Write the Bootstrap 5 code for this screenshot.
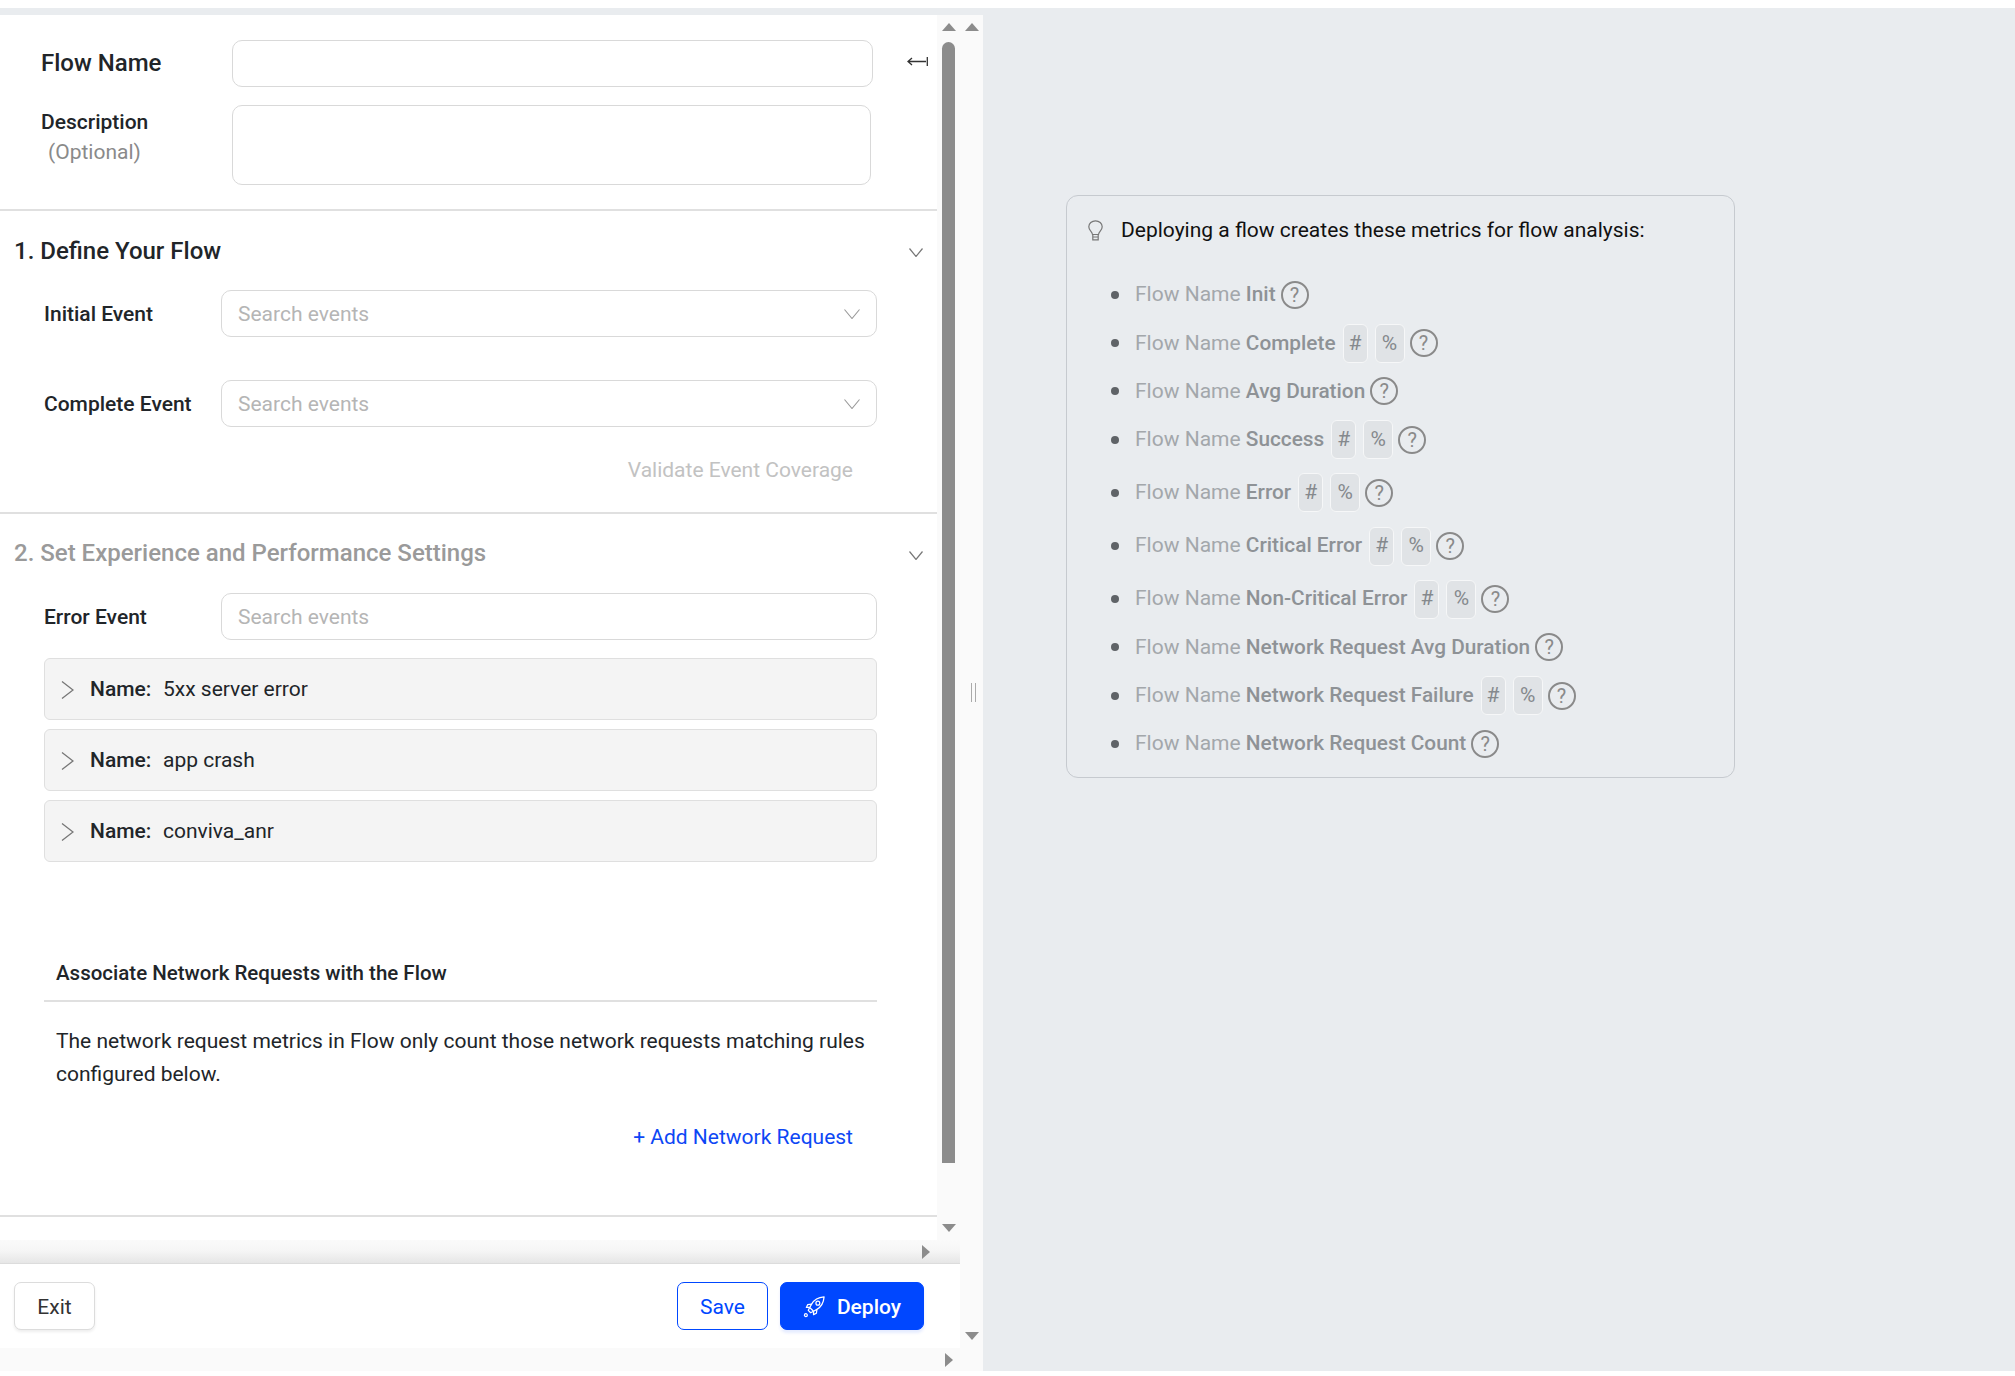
<!DOCTYPE html>
<html lang="en">
<head>
<meta charset="utf-8">
<title>Flow</title>
<link href="https://cdn.jsdelivr.net/npm/bootstrap@5.3.0/dist/css/bootstrap.min.css" rel="stylesheet">
<style>
html,body{height:100%;}
body{font-family:Roboto,"Liberation Sans",sans-serif;font-size:21px;color:#212529;background:#fff;overflow:hidden;}
.page-shell{margin-top:8px;height:1363px;background:#e9ecef;}
.left-panel{width:983px;margin-top:7px;background:#fafafa;height:1356px;}
.upper{height:1333px;}
.upper-col{width:960px;}
.inner-row{height:1225px;}
.form-pane{width:937px;background:#fff;}
.vtrack{width:23px;}
.tri-up,.tri-down{width:0;height:0;border-left:7.5px solid transparent;border-right:7.5px solid transparent;}
.tri-up{border-bottom:8px solid #8c8c8c;margin-top:8px;}
.tri-down{border-top:8px solid #8c8c8c;margin-bottom:8px;}
.tri-right{width:0;height:0;border-top:7.5px solid transparent;border-bottom:7.5px solid transparent;border-left:8px solid #8c8c8c;}
.thumb{width:13px;height:1121px;background:#8c8c8c;border-radius:7px 7px 0 0;margin-top:11px;}
.hbar{height:23px;padding-right:30px;}
.hbar-shade{background:linear-gradient(#fafafa,#f6f6f6 45%,#e6e6e6);}
.foot{height:85px;background:#fff;border-top:1px solid #dcdcdc;padding:18px 36px 0 14px;}
.split-grip{width:5px;height:19px;border-left:1px solid #aaa;border-right:1px solid #aaa;left:11px;top:668px;}
.name-block{padding:25px 0 24px 41px;}
.flow-label{width:191px;font-size:24px;font-weight:500;color:#212529;line-height:47px;}
.desc-label{width:191px;font-weight:500;line-height:30px;padding-top:2px;}
.opt-note{font-weight:400;color:#8a8a8a;padding-left:7px;}
.fld{border:1px solid #d9d9d9;border-radius:10px;font-size:21px;background:#fff;height:47px;padding:0 16px;box-shadow:none;}
.fld::placeholder{color:#b5b5b5;}
.name-input{width:641px;}
.desc-input{width:639px;height:80px;resize:none;}
.desc-row{margin-top:18px;}
.collapse-ico{margin-left:34px;margin-top:17px;width:21px;height:9px;}
.rule{border-top:2px solid #e0e0e0;}
.sec-title{font-size:24px;font-weight:500;line-height:30px;padding:25px 0 0 14px;color:#212529;}
.sec-title.dim{color:#9a9a9a;padding-top:24px;}
.sec-chev{margin-right:14px;margin-top:37px;width:14px;height:9px;}
.ev-row{padding-left:44px;}
.ev-label{width:177px;height:47px;font-weight:500;line-height:48px;}
.ev-box{width:656px;}
.ev-box .fld{width:100%;}
.sel-chev{position:absolute;right:17px;top:19px;width:16px;height:10px;}
.gap-24{margin-top:24px;}
.gap-25{margin-top:25px;}
.gap-43{margin-top:43px;}
.validate{color:#c2c2c2;line-height:30px;padding-right:84px;margin-top:28px;padding-bottom:27px;text-align:right;}
.err-rows{margin:18px 0 0 44px;width:833px;}
.err-item{height:62px;background:#f4f4f4;border:1px solid #dfdfdf;border-radius:6px;margin-bottom:9px;padding:2px 0 0 16px;}
.err-chev{width:13px;height:18px;margin-right:16px;}
.err-name{font-weight:500;width:73px;}
.assoc-head{margin:96px 0 0 44px;width:833px;padding:0 0 12px 12px;line-height:30px;font-weight:500;font-size:20.5px;border-bottom:2px solid #e0e0e0;}
.assoc-text{margin:23px 0 0 56px;width:820px;line-height:33px;}
.add-link{margin-top:31px;padding-right:84px;line-height:30px;text-align:right;}
.add-link a{color:#0d47f5;text-decoration:none;}
.end-rule{margin-top:63px;}
.act{height:48px;border-radius:7px;font-size:21px;display:flex;align-items:center;justify-content:center;padding:3px 0 0;}
.act-exit{width:81px;background:#fff;border:1px solid #dcdcdc;color:#333;box-shadow:0 2px 3px rgba(0,0,0,.07);}
.act-save{width:91px;background:#fff;border:1px solid #0047ff;color:#0047ff;margin-right:12px;}
.act-deploy{width:144px;background:#0047ff;border:1px solid #0047ff;color:#fff;box-shadow:0 3px 3px rgba(0,71,255,.1);gap:11px;font-weight:500;}
.rocket{width:23px;height:23px;margin-top:-3px;}
.info-pane{padding:187px 0 0 83px;}
.info-box{width:669px;height:583px;border:1px solid #c6cacf;border-radius:12px;}
.info-head{padding:19px 0 0 21px;line-height:30px;color:#111;}
.bulb{width:15px;height:21px;margin-right:18px;}
.metric-list{list-style:none;margin:26px 0 0 0;padding:0 0 0 68px;}
.metric{height:48.2px;color:#a3a7ab;position:relative;gap:7px;}
.metric::before{content:"";position:absolute;left:-24px;top:20px;width:8px;height:8px;border-radius:50%;background:#5f6367;}
.metric.more{margin-top:5px;}
.metric b{font-weight:500;font-size:20.8px;color:#8e9296;}
.unit{display:inline-flex;align-items:center;justify-content:center;height:39px;background:#e0e3e6;border:1px solid #f6f7f8;border-radius:6px;color:#85898d;font-size:21px;}
.unit-n{width:25px;}
.unit-p{width:30px;}
.help{display:inline-flex;align-items:center;justify-content:center;width:28px;height:28px;border:2.500px solid #8a8a8a;border-radius:50%;color:#8a8a8a;font-size:20px;line-height:1;margin-left:-2px;}
</style>
</head>
<body>
<svg width="0" height="0" class="position-absolute" aria-hidden="true">
  <symbol id="sel" viewBox="0 0 16 10"><path d="M.5.5 8 9.5 15.500.5" fill="none" stroke="#999" stroke-width="1.100"/></symbol>
  <symbol id="sec" viewBox="0 0 14 9"><path d="M.5.5 7 8.500 13.500.5" fill="none" stroke="#777" stroke-width="1.200"/></symbol>
  <symbol id="rowc" viewBox="0 0 13 18"><path d="M1 .5 12 9 1 17.500" fill="none" stroke="#777" stroke-width="1.300"/></symbol>
</svg>
<div class="page-shell d-flex">
  <div class="left-panel d-flex flex-column flex-shrink-0">
    <div class="upper d-flex">
      <div class="upper-col d-flex flex-column">
        <div class="inner-row d-flex">
          <div class="form-pane">
            <div class="name-block">
              <div class="d-flex">
                <div class="flow-label">Flow Name</div>
                <input class="form-control fld name-input" type="text" aria-label="Flow Name">
                <svg class="collapse-ico" viewBox="0 0 21 9" fill="none" stroke="#333" stroke-width="1.3"><path d="M1 4.5H19M5 1 1 4.5 5 8M20.3 0V9"/></svg>
              </div>
              <div class="d-flex desc-row">
                <div class="desc-label">Description<div class="opt-note">(Optional)</div></div>
                <textarea class="form-control fld desc-input" aria-label="Description"></textarea>
              </div>
            </div>
            <div class="rule"></div>
            <div class="d-flex justify-content-between align-items-start">
              <div class="sec-title">1. Define Your Flow</div>
              <svg class="sec-chev"><use href="#sec"/></svg>
            </div>
            <div class="ev-row d-flex gap-24">
              <div class="ev-label">Initial Event</div>
              <div class="ev-box position-relative"><input class="form-control fld" placeholder="Search events"><svg class="sel-chev"><use href="#sel"/></svg></div>
            </div>
            <div class="ev-row d-flex gap-43">
              <div class="ev-label">Complete Event</div>
              <div class="ev-box position-relative"><input class="form-control fld" placeholder="Search events"><svg class="sel-chev"><use href="#sel"/></svg></div>
            </div>
            <div class="validate">Validate Event Coverage</div>
            <div class="rule"></div>
            <div class="d-flex justify-content-between align-items-start">
              <div class="sec-title dim">2. Set Experience and Performance Settings</div>
              <svg class="sec-chev"><use href="#sec"/></svg>
            </div>
            <div class="ev-row d-flex gap-25">
              <div class="ev-label">Error Event</div>
              <div class="ev-box"><input class="form-control fld" placeholder="Search events"></div>
            </div>
            <div class="err-rows">
              <div class="err-item d-flex align-items-center"><svg class="err-chev"><use href="#rowc"/></svg><span class="err-name">Name:</span><span>5xx server error</span></div>
              <div class="err-item d-flex align-items-center"><svg class="err-chev"><use href="#rowc"/></svg><span class="err-name">Name:</span><span>app crash</span></div>
              <div class="err-item d-flex align-items-center"><svg class="err-chev"><use href="#rowc"/></svg><span class="err-name">Name:</span><span>conviva_anr</span></div>
            </div>
            <div class="assoc-head">Associate Network Requests with the Flow</div>
            <p class="assoc-text mb-0">The network request metrics in Flow only count those network requests matching rules configured below.</p>
            <div class="add-link"><a href="#">+ Add Network Request</a></div>
            <div class="rule end-rule"></div>
          </div>
          <div class="vtrack d-flex flex-column align-items-center">
            <div class="tri-up"></div>
            <div class="thumb"></div>
            <div class="tri-down mt-auto"></div>
          </div>
        </div>
        <div class="hbar hbar-shade d-flex align-items-center justify-content-end"><div class="tri-right"></div></div>
        <div class="foot d-flex justify-content-between align-items-start">
          <button class="btn act act-exit" type="button">Exit</button>
          <div class="d-flex">
            <button class="btn act act-save" type="button">Save</button>
            <button class="btn act act-deploy" type="button">
              <svg class="rocket" viewBox="0 0 24 24" fill="none" stroke="#fff" stroke-width="1.3" stroke-linejoin="round"><path d="M22 2C16 2.500 11.500 5 9 9.500L7 13 11 17 14.500 15C19 12.500 21.500 8 22 2Z"/><circle cx="15.500" cy="8.500" r="2"/><path d="M9 9.500 5 10 3.500 13 7 13M14.500 15 14 19 11 20.500 11 17M7 13 5.500 16 8 18.500 11 17"/><circle cx="3" cy="21" r="1.500"/></svg>
              Deploy
            </button>
          </div>
        </div>
      </div>
      <div class="vtrack d-flex flex-column align-items-center position-relative">
        <div class="tri-up"></div>
        <div class="split-grip position-absolute"></div>
        <div class="tri-down mt-auto"></div>
      </div>
    </div>
    <div class="hbar d-flex align-items-center justify-content-end"><div class="tri-right"></div></div>
  </div>
  <div class="info-pane flex-grow-1">
    <div class="info-box">
      <div class="info-head d-flex align-items-center">
        <svg class="bulb" viewBox="0 0 15 21" fill="none" stroke="#777" stroke-width="1.2"><path d="M4.500 14.500C4.200 11.500 .8 10.500 .8 6.800A6.700 6 0 0 1 14.200 6.800C14.200 10.500 10.800 11.500 10.500 14.500ZM4.800 14.500V19.800H10.200V14.500M4.800 17H10.200"/></svg>
        <span>Deploying a flow creates these metrics for flow analysis:</span>
      </div>
      <ul class="metric-list">
        <li class="metric d-flex align-items-center"><span>Flow Name <b>Init</b></span><span class="help">?</span></li>
        <li class="metric d-flex align-items-center"><span>Flow Name <b>Complete</b></span><span class="unit unit-n">#</span><span class="unit unit-p">%</span><span class="help">?</span></li>
        <li class="metric d-flex align-items-center"><span>Flow Name <b>Avg Duration</b></span><span class="help">?</span></li>
        <li class="metric d-flex align-items-center"><span>Flow Name <b>Success</b></span><span class="unit unit-n">#</span><span class="unit unit-p">%</span><span class="help">?</span></li>
        <li class="metric more d-flex align-items-center"><span>Flow Name <b>Error</b></span><span class="unit unit-n">#</span><span class="unit unit-p">%</span><span class="help">?</span></li>
        <li class="metric more d-flex align-items-center"><span>Flow Name <b>Critical Error</b></span><span class="unit unit-n">#</span><span class="unit unit-p">%</span><span class="help">?</span></li>
        <li class="metric more d-flex align-items-center"><span>Flow Name <b>Non-Critical Error</b></span><span class="unit unit-n">#</span><span class="unit unit-p">%</span><span class="help">?</span></li>
        <li class="metric d-flex align-items-center"><span>Flow Name <b>Network Request Avg Duration</b></span><span class="help">?</span></li>
        <li class="metric d-flex align-items-center"><span>Flow Name <b>Network Request Failure</b></span><span class="unit unit-n">#</span><span class="unit unit-p">%</span><span class="help">?</span></li>
        <li class="metric d-flex align-items-center"><span>Flow Name <b>Network Request Count</b></span><span class="help">?</span></li>
      </ul>
    </div>
  </div>
</div>
<script src="https://cdn.jsdelivr.net/npm/bootstrap@5.3.0/dist/js/bootstrap.bundle.min.js"></script>
</body>
</html>
